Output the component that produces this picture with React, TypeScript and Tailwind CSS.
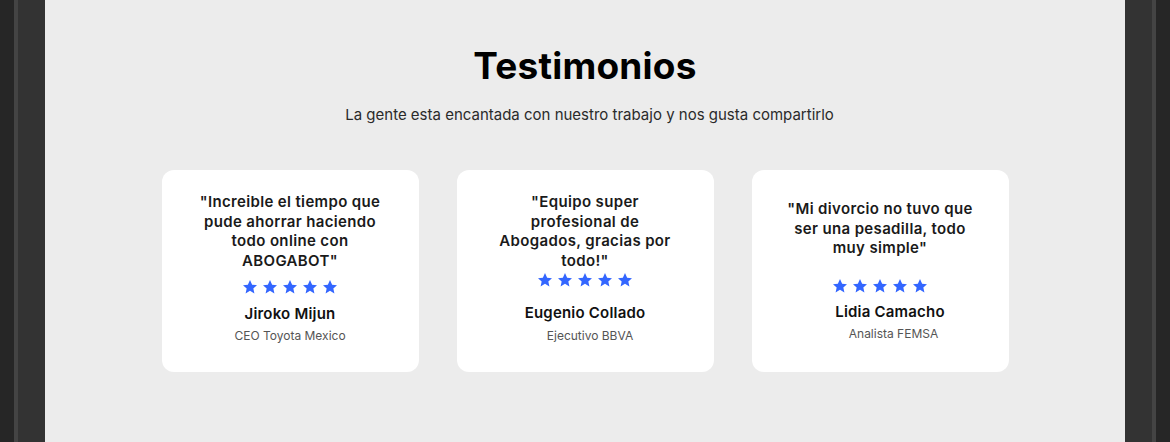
import React from 'react'

interface Testimonial {
  quote: string
  name: string
  role: string
  quoteClass: string
  starsClass: string
  nameClass: string
  roleClass: string
}

const testimonials: Testimonial[] = [
  {
    quote: '"Increible el tiempo que pude ahorrar haciendo todo online con ABOGABOT"',
    name: 'Jiroko Mijun',
    role: 'CEO Toyota Mexico',
    quoteClass: 'mt-0',
    starsClass: 'mt-[9px]',
    nameClass: 'mt-[8px]',
    roleClass: 'mt-[2px]',
  },
  {
    quote: '"Equipo super profesional de Abogados, gracias por todo!"',
    name: 'Eugenio Collado',
    role: 'Ejecutivo BBVA',
    quoteClass: 'mt-0',
    starsClass: 'mt-[2px]',
    nameClass: 'mt-[14px]',
    roleClass: 'mt-[3px] pl-[10px]',
  },
  {
    quote: '"Mi divorcio no tuvo que ser una pesadilla, todo muy simple"',
    name: 'Lidia Camacho',
    role: 'Analista FEMSA',
    quoteClass: 'mt-[7px]',
    starsClass: 'mt-[20px]',
    nameClass: 'mt-[7px] pl-[20px]',
    roleClass: 'mt-[2px] pl-[27px]',
  },
]

const Star = () => (
  <svg width="16" height="16" viewBox="0 0 24 24" fill="#3366ff">
    <path d="M12 1.5l3.2 7 7.3.7-5.5 5 1.6 7.4L12 17.8l-6.6 3.8L7 14.2l-5.5-5 7.3-.7z" />
  </svg>
)

const TestimonialCard = ({ t }: { t: Testimonial }) => (
  <div className="w-[257px] h-[202px] bg-white rounded-[12px] pt-[22px] flex flex-col items-center">
    <p
      className={`w-[192px] text-center text-[15px] leading-[19.5px] font-semibold tracking-[0.35px] text-[#1a1a1a] ${t.quoteClass}`}
    >
      {t.quote}
    </p>
    <div className={`flex gap-[4px] ${t.starsClass}`}>
      {[1, 2, 3, 4, 5].map((i) => (
        <Star key={i} />
      ))}
    </div>
    <div
      className={`text-[15px] leading-[22px] font-semibold tracking-[0.2px] text-[#111] ${t.nameClass}`}
    >
      {t.name}
    </div>
    <div className={`text-[12px] leading-[18px] text-[#555] ${t.roleClass}`}>{t.role}</div>
  </div>
)

export default function App() {
  return (
    <div
      className="w-[1170px] h-[442px] flex bg-[#262626]"
      style={{ fontFamily: 'Inter, "Noto Sans", sans-serif' }}
    >
      <div className="w-[14px]" />
      <div className="w-[4px] bg-[#444]" />
      <div className="w-[27px] bg-[#333]" />
      <main className="flex-1 bg-[#ececec] flex flex-col items-center">
        <h2 className="mt-[44px] text-[37px] leading-[44px] font-bold text-black tracking-[0.2px]">
          Testimonios
        </h2>
        <p className="mt-[17px] pl-[9px] text-[15px] leading-[20px] text-[#2a2a2a]">
          La gente esta encantada con nuestro trabajo y nos gusta compartirlo
        </p>
        <div className="mt-[45px] flex gap-[38px]">
          {testimonials.map((t) => (
            <TestimonialCard key={t.name} t={t} />
          ))}
        </div>
      </main>
      <div className="w-[27px] bg-[#333]" />
      <div className="w-[4px] bg-[#444]" />
      <div className="w-[14px]" />
    </div>
  )
}
